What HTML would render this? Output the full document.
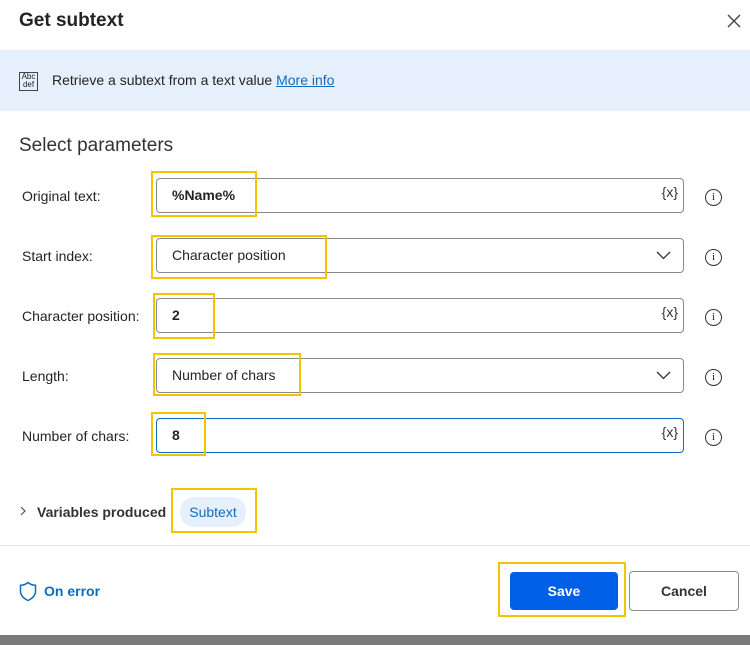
<!DOCTYPE html><html><head><style>
body{margin:0;width:750px;height:645px;background:#fff;font-family:"Liberation Sans",sans-serif;position:relative;overflow:hidden;color:#242424}
.a{position:absolute}
.f{position:absolute;left:156px;width:526px;height:33px;border:1px solid #8a8a8a;border-radius:4px;box-sizing:content-box;font-size:14px;line-height:33px;text-indent:15px}
.l{position:absolute;left:22px;font-size:14px;color:#242424}
.y{position:absolute;border:2px solid #f5c400}
.i{position:absolute;left:705px;width:15px;height:15px;border:1px solid #333;border-radius:50%;font-size:11px;text-align:center;line-height:15px;font-family:"Liberation Serif",serif}
.x{position:absolute;right:5px;top:-3px;font-size:14px;text-indent:0;color:#333}
.c{position:absolute;right:12px;top:12px}
</style></head><body>
<div class="a" style="left:19px;top:10px;font-size:19px;font-weight:bold">Get subtext</div>
<svg class="a" style="left:727px;top:14px" width="14" height="14" viewBox="0 0 14 14"><path d="M1 1L13 13M13 1L1 13" stroke="#444" stroke-width="1.4"/></svg>
<div class="a" style="left:0;top:50px;width:750px;height:61px;background:#e6effc"></div>
<div class="a" style="left:19px;top:72px;width:17px;height:17px;border:1px solid #444;font-size:8px;line-height:8px;text-align:center">Abc<br>def</div>
<div class="a" style="left:52px;top:72px;font-size:14px">Retrieve a subtext from a text value <span style="color:#0f6cbd;text-decoration:underline">More info</span></div>
<div class="a" style="left:19px;top:135px;font-size:19px;color:#333">Select parameters</div>

<div class="l" style="top:188px">Original text:</div>
<div class="f" style="top:178px"><b>%Name%</b><span class="x">{x}</span></div>
<div class="i" style="top:189px">i</div>
<div class="y" style="left:151px;top:171px;width:102px;height:42px"></div>

<div class="l" style="top:248px">Start index:</div>
<div class="f" style="top:238px">Character position<svg class="c" width="15" height="9" viewBox="0 0 15 9"><path d="M1 1L7.5 7.5L14 1" fill="none" stroke="#333" stroke-width="1.3"/></svg></div>
<div class="i" style="top:249px">i</div>
<div class="y" style="left:151px;top:235px;width:172px;height:40px"></div>

<div class="l" style="top:308px">Character position:</div>
<div class="f" style="top:298px"><b>2</b><span class="x">{x}</span></div>
<div class="i" style="top:309px">i</div>
<div class="y" style="left:153px;top:293px;width:58px;height:42px"></div>

<div class="l" style="top:368px">Length:</div>
<div class="f" style="top:358px">Number of chars<svg class="c" width="15" height="9" viewBox="0 0 15 9"><path d="M1 1L7.5 7.5L14 1" fill="none" stroke="#333" stroke-width="1.3"/></svg></div>
<div class="i" style="top:369px">i</div>
<div class="y" style="left:153px;top:353px;width:144px;height:39px"></div>

<div class="l" style="top:428px">Number of chars:</div>
<div class="f" style="top:418px;border-color:#0f6cbd"><b>8</b><span class="x">{x}</span></div>
<div class="i" style="top:429px">i</div>
<div class="y" style="left:151px;top:412px;width:51px;height:40px"></div>

<svg class="a" style="left:20px;top:506px" width="6" height="10" viewBox="0 0 6 10"><path d="M1 1L5 5L1 9" fill="none" stroke="#555" stroke-width="1.2"/></svg>
<div class="a" style="left:37px;top:504px;font-size:14px;font-weight:bold;color:#333">Variables produced</div>
<div class="a" style="left:180px;top:497px;width:66px;height:30px;background:#e6effc;border-radius:14px;color:#0f6cbd;font-size:14px;text-align:center;line-height:30px">Subtext</div>
<div class="y" style="left:171px;top:488px;width:82px;height:41px"></div>

<div class="a" style="left:0;top:545px;width:750px;height:1px;background:#e5e5e5"></div>
<svg class="a" style="left:19px;top:581px" width="18" height="21" viewBox="0 0 18 21"><path d="M9 1.5C6.5 3.5 4 4.3 1.5 4.3V10c0 4.5 3.2 7.5 7.5 9.5 4.3-2 7.5-5 7.5-9.5V4.3C14 4.3 11.5 3.5 9 1.5Z" fill="none" stroke="#0f6cbd" stroke-width="1.5"/></svg>
<div class="a" style="left:44px;top:583px;font-size:14px;font-weight:bold;color:#0f6cbd">On error</div>
<div class="a" style="left:510px;top:572px;width:108px;height:38px;background:#005fe7;border-radius:4px;color:#fff;font-size:14px;font-weight:bold;text-align:center;line-height:38px">Save</div>
<div class="y" style="left:498px;top:562px;width:124px;height:51px"></div>
<div class="a" style="left:629px;top:571px;width:108px;height:38px;border:1px solid #8a8a8a;border-radius:4px;font-size:14px;font-weight:bold;text-align:center;line-height:38px;color:#333">Cancel</div>
<div class="a" style="left:0;top:635px;width:750px;height:10px;background:#7a7a7a"></div>
</body></html>
